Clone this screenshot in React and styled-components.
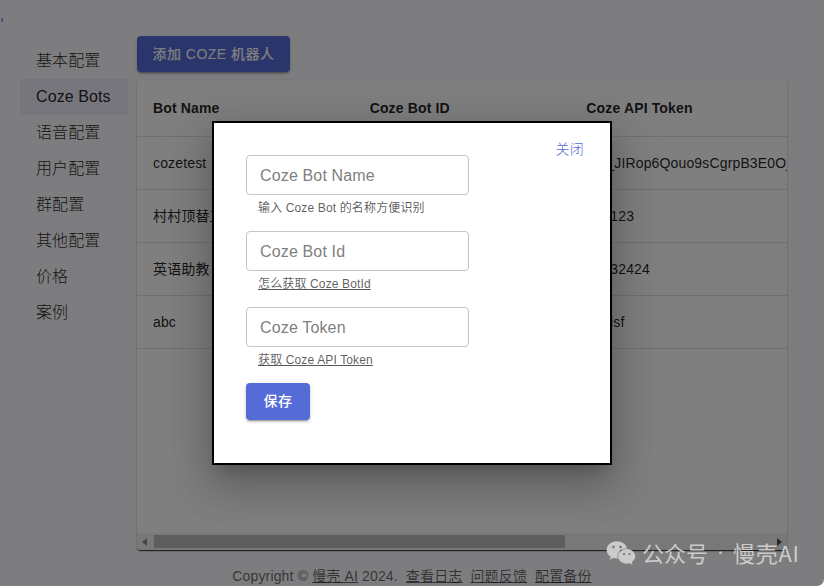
import React from 'react';
import styled, { createGlobalStyle } from 'styled-components';
import { FaWeixin } from 'react-icons/fa';

const GlobalStyle = createGlobalStyle`
  * { box-sizing: border-box; }
  body {
    margin: 0;
    background: #fff;
    color: rgba(0, 0, 0, 0.87);
    font-family: "Liberation Sans", "Noto Sans CJK SC", sans-serif;
    font-size: 14px;
    overflow: hidden;
  }
`;

const Page = styled.div`
  position: relative;
  height: 586px;
  overflow: hidden;
  display: flex;
  flex-direction: column;
  background: #fbfbff;
  border-bottom-right-radius: 7px;
`;

const TopBar = styled.header`
  height: 36px;
  padding: 8px 0 0;
  font-size: 14px;
  line-height: 14px;
  color: #1c4fc4;
`;

const Body = styled.div`
  display: flex;
  height: 514px;
  padding-left: 20px;
`;

const SideNav = styled.nav`
  width: 108px;
  margin: 7px 9px 0 0;
  display: flex;
  flex-direction: column;
`;

const NavItem = styled.a`
  flex: none;
  height: 36px;
  padding-left: 16px;
  font-size: 16px;
  font-weight: 300;
  line-height: 35px;
  letter-spacing: 0.1px;
  background: ${(p) => (p.$active ? '#eeecfb' : 'transparent')};
`;

const Main = styled.main`
  width: 650px;
  display: flex;
  flex-direction: column;
  align-items: flex-start;
  gap: 8px;
`;

const Button = styled.button`
  border: 0;
  border-radius: 4px;
  width: ${(p) => p.$width}px;
  height: ${(p) => p.$height}px;
  padding: 0 0 3px;
  background: #556cd6;
  color: #fff;
  font-family: inherit;
  font-size: 14px;
  font-weight: 500;
  letter-spacing: 0.5px;
  white-space: nowrap;
  box-shadow: 0 3px 1px -2px rgba(0, 0, 0, 0.2), 0 2px 2px rgba(0, 0, 0, 0.14),
    0 1px 5px rgba(0, 0, 0, 0.12);
`;

const Paper = styled.section`
  width: 650px;
  height: 470px;
  display: flex;
  flex-direction: column;
  background: #fff;
  border-radius: 4px;
  overflow: hidden;
  box-shadow: 0 2px 1px -1px rgba(0, 0, 0, 0.5), 0 1px 1px rgba(0, 0, 0, 0.5),
    0 1px 3px rgba(0, 0, 0, 0.12);
`;

const Table = styled.div`
  flex: 1;
`;

const Row = styled.div`
  display: grid;
  grid-template-columns: repeat(3, 216.67px);
  align-items: center;
  height: ${(p) => (p.$head ? 57 : 53)}px;
  border-bottom: 1px solid #e0e0e0;
  font-weight: ${(p) => (p.$head ? 700 : 400)};
  letter-spacing: 0.15px;
`;

const Cell = styled.span`
  padding-left: 16px;
  line-height: 20px;
  white-space: nowrap;
`;

const TokenCell = styled(Cell)`
  padding-left: ${(p) => p.$inset}px;
`;

const ScrollBar = styled.div`
  display: flex;
  align-items: center;
  justify-content: space-between;
  height: 17px;
  padding: 0 5px;
  background: #f1f1f1;
`;

const Thumb = styled.div`
  width: 411px;
  height: 13px;
  margin: 0 auto 0 7px;
  background: #bcbcbc;
`;

const Arrow = styled.span`
  border: 4px solid transparent;
  border-left-width: ${(p) => (p.$right ? 5 : 0)}px;
  border-right-width: ${(p) => (p.$right ? 0 : 5)}px;
  border-left-color: #505050;
  border-right-color: #8a8a8a;
`;

const Footer = styled.footer`
  display: flex;
  justify-content: center;
  align-items: center;
  gap: 8px;
  height: 36px;
  padding-top: 15px;
  font-size: 14px;
  line-height: 20px;
  letter-spacing: 0.15px;
  color: rgba(0, 0, 0, 0.6);
  white-space: nowrap;
`;

const FooterLink = styled.a`
  text-decoration: underline;
`;

const Backdrop = styled.div`
  position: absolute;
  inset: 0;
  display: flex;
  align-items: center;
  justify-content: center;
  background: rgba(0, 0, 0, 0.5);
`;

const Dialog = styled.div`
  display: flex;
  justify-content: space-between;
  align-items: flex-start;
  width: 400px;
  height: 344px;
  padding: 32px;
  border: 2px solid #000;
  background: #fff;
  box-shadow: 0 11px 15px -7px rgba(0, 0, 0, 0.2), 0 24px 38px 3px rgba(0, 0, 0, 0.14),
    0 9px 46px 8px rgba(0, 0, 0, 0.12);
`;

const Form = styled.form`
  width: 223px;
`;

const Field = styled.div`
  height: 76px;
`;

const Input = styled.input`
  display: block;
  width: 100%;
  height: 40px;
  padding: 1px 13px 0;
  border: 1px solid #c4c4c4;
  border-radius: 4px;
  background: #fff;
  font: 16px "Liberation Sans", sans-serif;
  letter-spacing: 0.15px;
  &::placeholder {
    color: #7f7f7f;
    opacity: 1;
  }
`;

const Helper = styled.p`
  margin: 3px 0 0 12px;
  font-size: 12px;
  line-height: 20px;
  letter-spacing: 0.14px;
  color: rgba(0, 0, 0, 0.65);
  text-decoration: ${(p) => (p.$link ? 'underline' : 'none')};
  text-underline-offset: 1px;
  white-space: nowrap;
`;

const CloseLink = styled.a`
  margin: -17px -6px 0 0;
  font-size: 14px;
  font-weight: 300;
  line-height: 22px;
  letter-spacing: 0.3px;
  color: #556cd6;
`;

const Watermark = styled.div`
  position: absolute;
  left: 606px;
  top: 537px;
  display: flex;
  align-items: center;
  height: 32px;
  color: #cbcbcb;
  font: 22px/28px "Noto Sans CJK SC", sans-serif;
  white-space: nowrap;
`;

const WatermarkText = styled.span`
  margin: -3px 0 0 6px;
`;

const WatermarkDot = styled.span`
  width: 25px;
  margin-top: -3px;
  text-align: center;
  font-family: "Liberation Sans", sans-serif;
`;

const WatermarkName = styled.span`
  margin-top: -3px;
  letter-spacing: 0.7px;
`;

const menu = ['基本配置', 'Coze Bots', '语音配置', '用户配置', '群配置', '其他配置', '价格', '案例'];

const bots = [
  { name: 'cozetest', token: '_JIRop6Qouo9sCgrpB3E0Oj', inset: 36 },
  { name: '村村顶替工', token: '123', inset: 40 },
  { name: '英语助教', token: '32424', inset: 40 },
  { name: 'abc', token: 'dsf', inset: 35 },
];

const fields = [
  { label: 'Coze Bot Name', help: '输入 Coze Bot 的名称方便识别' },
  { label: 'Coze Bot Id', help: '怎么获取 Coze BotId', link: true },
  { label: 'Coze Token', help: '获取 Coze API Token', link: true },
];

export default function App() {
  return (
    <>
      <GlobalStyle />
      <Page>
        <TopBar>,</TopBar>
        <Body>
          <SideNav>
            {menu.map((item) => (
              <NavItem key={item} $active={item === 'Coze Bots'}>{item}</NavItem>
            ))}
          </SideNav>
          <Main>
            <Button $width={153} $height={36}>添加 COZE 机器人</Button>
            <Paper>
              <Table>
                <Row $head>
                  <Cell>Bot Name</Cell>
                  <Cell>Coze Bot ID</Cell>
                  <Cell>Coze API Token</Cell>
                </Row>
                {bots.map((bot) => (
                  <Row key={bot.name}>
                    <Cell>{bot.name}</Cell>
                    <Cell />
                    <TokenCell $inset={bot.inset}>{bot.token}</TokenCell>
                  </Row>
                ))}
              </Table>
              <ScrollBar>
                <Arrow />
                <Thumb />
                <Arrow $right />
              </ScrollBar>
            </Paper>
          </Main>
        </Body>
        <Footer>
          <span>Copyright © <FooterLink>慢壳 AI</FooterLink> 2024.</span>
          <FooterLink>查看日志</FooterLink>
          <FooterLink>问题反馈</FooterLink>
          <FooterLink>配置备份</FooterLink>
        </Footer>
        <Backdrop>
          <Dialog>
            <Form>
              {fields.map((field) => (
                <Field key={field.label}>
                  <Input placeholder={field.label} />
                  <Helper $link={field.link}>{field.help}</Helper>
                </Field>
              ))}
              <Button type="button" $width={64} $height={37}>保存</Button>
            </Form>
            <CloseLink>关闭</CloseLink>
          </Dialog>
        </Backdrop>
        <Watermark>
          <FaWeixin size={30} />
          <WatermarkText>公众号</WatermarkText>
          <WatermarkDot>·</WatermarkDot>
          <WatermarkName>慢壳AI</WatermarkName>
        </Watermark>
      </Page>
    </>
  );
}
